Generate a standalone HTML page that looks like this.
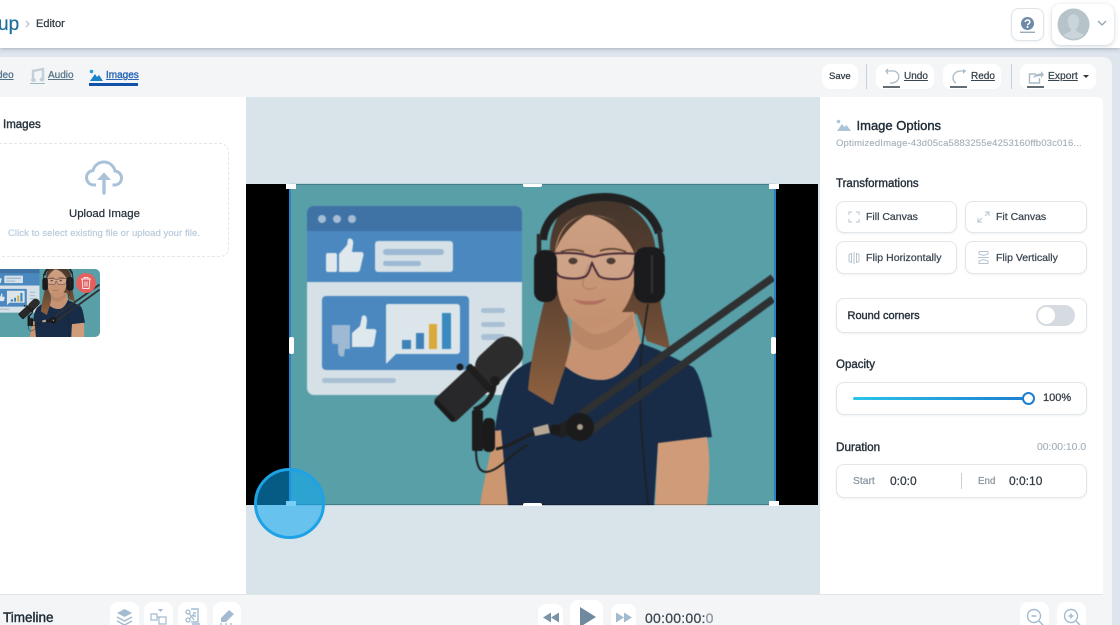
<!DOCTYPE html>
<html lang="en"><head><meta charset="utf-8"><title>Editor</title>
<style>
*{box-sizing:border-box}
html,body{margin:0;padding:0;width:1120px;height:625px;overflow:hidden;background:#dfe5ec;font-family:"Liberation Sans",sans-serif;color:#1f2a37}
#w{position:relative;width:1120px;height:625px;overflow:hidden;background:#dfe5ec}
#f{position:absolute;left:0;top:0;width:1120px;height:625px;filter:blur(.3px)}
.a{position:absolute}
.t{position:absolute;white-space:nowrap;line-height:1;-webkit-text-stroke:.25px currentColor}
.h{-webkit-text-stroke:.4px currentColor}
.b{position:absolute;background:#fff;border-radius:8px}
.o{position:absolute;background:#fff;border:1px solid #e1e6ea;border-radius:8px;box-shadow:0 1px 2px rgba(60,80,100,.08)}
svg{position:absolute;overflow:visible}
</style></head><body>

<svg width="0" height="0" style="position:absolute">
<defs>
<linearGradient id="hg" x1="0" y1="0" x2="0" y2="1"><stop offset="0" stop-color="#43352c"/><stop offset=".45" stop-color="#5d4231"/><stop offset="1" stop-color="#8f6240"/></linearGradient>
<linearGradient id="sk" x1="0" y1="0" x2="0" y2="1"><stop offset="0" stop-color="#cda083"/><stop offset="1" stop-color="#c4906f"/></linearGradient>
<symbol id="photo" viewBox="290 184 485 321" preserveAspectRatio="none">
<rect x="290" y="184" width="485" height="321" fill="#589fa8"/>
<rect x="307" y="206" width="215" height="189" rx="7" fill="#d5e1e6"/>
<path d="M307 282V213a7 7 0 0 1 7-7h201a7 7 0 0 1 7 7v69z" fill="#4a88bf"/>
<path d="M307 231V213a7 7 0 0 1 7-7h201a7 7 0 0 1 7 7v18z" fill="#3f72a5"/>
<circle cx="322" cy="219" r="4" fill="#a5bcd4"/><circle cx="337" cy="219" r="4" fill="#a5bcd4"/><circle cx="352" cy="219" r="4" fill="#a5bcd4"/>
<rect x="326" y="253" width="11" height="19" rx="2" fill="#dfe8ec"/>
<path d="M339 272V254l8-9 1-6c4-2 6 2 5 6l-1 7h9c3 0 3 3 2 5l-3 13c-1 2-2 2-4 2z" fill="#dfe8ec"/>
<rect x="375" y="241" width="78" height="31" rx="3" fill="#d5e1e6"/>
<rect x="383" y="249" width="61" height="6" rx="3" fill="#9db9d3"/><rect x="383" y="261" width="38" height="5" rx="2.5" fill="#9db9d3"/>
<rect x="322" y="296" width="147" height="74" rx="4" fill="#4a88bf"/>
<path d="M332 325h18v24h-5l-1 7c-4 2-6-1-6-6v-6h-4c-2 0-2-2-2-4z" fill="#9db9d3"/>
<path d="M352 333l8-7 2-10c4-2 5 1 5 5l-1 8h8c2 0 3 2 2 4l-2 12c-1 2-2 2-4 2h-18z" fill="#dfe8ec"/>
<path d="M388 304h69a3 3 0 0 1 3 3v44a3 3 0 0 1-3 3h-61l-10 10V306a2 2 0 0 1 2-2z" fill="#dce6ea"/>
<rect x="402" y="340" width="9" height="9" fill="#3f82b8"/><rect x="416" y="333" width="8" height="16" fill="#3f82b8"/><rect x="429" y="324" width="8" height="25" fill="#d9a93a"/><rect x="442" y="313" width="9" height="36" fill="#3a8abf"/>
<rect x="481" y="308" width="24" height="5" rx="2.5" fill="#a9c0d4"/><rect x="481" y="322" width="24" height="5" rx="2.5" fill="#a9c0d4"/><rect x="481" y="334" width="24" height="6" rx="3" fill="#a9c0d4"/>
<rect x="322" y="378" width="74" height="5" rx="2.5" fill="#a9c0d4"/>
<!-- shirt -->
<path d="M495 430c3-24 8-46 18-57 8-8 18-12 30-16l22 9c10 9 22 14 36 14 18 0 30-16 39-37l16 6 37 18c8 8 14 36 19 70l-54 7-4 61H507l-6-72z" fill="#182b47"/>
<path d="M495 431l6-1 7 75h-28c4-26 10-50 15-74z" fill="#cb9670"/>
<path d="M658 443l49-6c4 22 2 46 0 68h-52z" fill="#cf9b78"/>
<!-- hair -->
<path d="M596 196c-28 0-44 20-46 50-1 22-1 40-7 60-6 26-13 56-15 84l25 15c4-14 9-28 13-40l5-26-4-25h70l10 27 23 8c-3-18-7-30-9-44l-6-60c-3-26-30-49-59-49z" fill="url(#hg)"/>
<!-- neck -->
<path d="M572 312h62l7 32-1 0c-9 21-21 36-39 36-14 0-27-6-36-14l6-22z" fill="#c69272"/>
<path d="M572 316c6 10 16 18 24 18 10 0 24-8 36-20l2 12c-8 12-24 24-38 24-10 0-18-6-24-14z" fill="#a9775a" opacity=".45"/>
<!-- face -->
<path d="M555 256c0-24 14-41 35-41 27 0 47 18 47 44 0 24-6 42-16 54-8 9-18 15-28 15-11 0-22-6-29-17-7-12-9-33-9-55z" fill="url(#sk)"/>
<path d="M556 250c3-18 12-32 30-35-10 6-24 18-30 35z" fill="#4f392c"/>
<path d="M590 215c20 4 38 20 46 42 2-24-16-40-46-42z" fill="#4f392c"/>
<path d="M588 265c-2 8-6 16-5 21 2 4 10 4 13 1" fill="none" stroke="#a9745a" stroke-width="1.200" opacity=".7"/>
<path d="M573 299c10 3 24 3 34-1-6 8-26 10-34 1z" fill="#b0705f"/>
<path d="M561 252c6-3 16-3 23 0M600 251c8-3 18-3 26 1" stroke="#57402f" stroke-width="1.600" fill="none"/>
<ellipse cx="573" cy="261" rx="4.500" ry="3.200" fill="#3a281d"/><ellipse cx="611" cy="261" rx="4.500" ry="3.200" fill="#3a281d"/>
<path d="M551 254c12-2 30-1 39 2 3 1 5 1 7 0 10-3 28-3 40-2-1 7-4 20-9 23-8 3-24 3-29-1-3-4-5-9-7-13-2 4-2 9-6 13-6 4-21 3-27 0-4-4-7-15-8-22z" fill="rgba(255,255,255,.1)" stroke="#4a2e3a" stroke-width="2"/>
<!-- headphones -->
<path d="M543 240c2-26 28-43 62-43 26 0 47 14 54 36" fill="none" stroke="#212122" stroke-width="8"/>
<path d="M539 234v20M659 230l3 22" stroke="#2a2a2b" stroke-width="4.500"/>
<rect x="534" y="250" width="23" height="52" rx="10" fill="#1b1b1d"/>
<rect x="634" y="247" width="31" height="56" rx="12" fill="#1b1b1d"/>
<path d="M652 255v38" stroke="#333335" stroke-width="2"/>
<path d="M648 304c-4 24-7 46-8 70-1 40 4 90 8 131" fill="none" stroke="#1e2022" stroke-width="1.600"/>
<!-- boom -->
<path d="M581 414L773 277.500" stroke="#2f3031" stroke-width="7.500"/>
<path d="M591 431L773 299" stroke="#2f3031" stroke-width="7.500"/>
<path d="M552 428l28-15 8 17-28 8z" fill="#1f2021"/>
<circle cx="580" cy="427" r="14" fill="#1b1b1c"/><circle cx="580" cy="427" r="3" fill="#a79a88"/>
<circle cx="555" cy="430" r="5.500" fill="#1b1b1c"/>
<path d="M533 428l15-4 2 9-15 3z" fill="#b5a794"/>
<path d="M496 449c14-2 26-12 38-16" stroke="#1f2021" stroke-width="3" fill="none"/>
<path d="M476 450c0 14 3 22 10 22 14-1 26-20 42-27" stroke="#1f2021" stroke-width="2" fill="none"/>
<!-- mic -->
<rect x="472" y="410" width="11" height="41" rx="2" fill="#1c1c1d"/>
<rect x="483" y="418" width="12" height="34" rx="5" fill="#1a1a1b"/>
<path d="M494 381c1 12-6 24-20 29" stroke="#1d1d1e" stroke-width="5" fill="none"/>
<g transform="rotate(-43 480.500 377.500)">
<rect x="429" y="362" width="55" height="31" rx="5" fill="#28282a"/>
<rect x="480" y="361" width="52" height="33" rx="15" fill="#2c2c2d"/>
<rect x="476" y="360" width="7" height="35" rx="2" fill="#1e1e1f"/>
<rect x="429" y="364" width="5" height="27" rx="2" fill="#1a1a1b"/>
</g>
<circle cx="495" cy="381" r="5" fill="#1d1d1e"/>
<circle cx="460" cy="367" r="3.500" fill="#1d1d1e"/>
</symbol>
</defs>
</svg>

<div id="w"><div id="f">
<!-- header -->
<div class="a" style="left:0;top:0;width:1120px;height:48px;background:#fff;box-shadow:0 1px 4px rgba(90,110,130,.45)"></div>
<div class="t" style="left:-2px;top:15px;font-size:19px;color:#1f6e9c">up</div>
<svg style="left:25px;top:20px" width="6" height="8" viewBox="0 0 6 8"><path d="M1 1l3 3-3 3" stroke="#a9b0b6" fill="none"/></svg>
<div class="t" style="left:36px;top:19px;font-size:11px;color:#333c44">Editor</div>

<div class="o" style="left:1011px;top:8px;width:33px;height:33px;border-color:#dfe4e8"></div>
<svg style="left:1019px;top:16px" width="17" height="17" viewBox="0 0 17 17"><circle cx="8.500" cy="7.500" r="6.500" fill="#6d8aa6"/><path d="M6.200 6c.2-2.600 4.800-2.600 4.700 0 0 1.700-2.300 1.600-2.300 3.200" stroke="#fff" stroke-width="1.500" fill="none"/><circle cx="8.500" cy="11" r="1" fill="#fff"/><path d="M1 16.200h15" stroke="#6d8aa6" stroke-width="1"/></svg>
<div class="b" style="left:1052px;top:4px;width:62px;height:41px;border-radius:9px;box-shadow:0 1px 4px rgba(80,100,120,.3)"></div>
<svg style="left:1057px;top:8px" width="33" height="33" viewBox="0 0 33 33"><circle cx="16.500" cy="16.500" r="16" fill="#b6c4ca"/><path d="M11 13c0-9 11-9 11 0 0 4-1.500 7-3 8v2l8 4a16 16 0 0 1-21 0l8-4v-2c-1.500-1-3-4-3-8z" fill="#c9d5da"/></svg>
<svg style="left:1097px;top:20px" width="10" height="7" viewBox="0 0 10 7"><path d="M1 1l4 4 4-4" stroke="#8ea3b3" stroke-width="1.300" fill="none"/></svg>

<!-- toolbar panel -->
<div class="a" style="left:0;top:57px;width:1112px;height:568px;background:#f3f5f7;border-radius:0 9px 0 0"></div>

<div class="t" style="left:-3px;top:71px;font-size:10px;color:#50708a;text-decoration:underline">deo</div>
<svg style="left:30px;top:67px" width="16" height="17" viewBox="0 0 16 17"><path d="M3 12V4l10-2v10" stroke="#c3d0d9" stroke-width="2.400" fill="none"/><ellipse cx="3.500" cy="13" rx="2.500" ry="2" fill="#c3d0d9"/><ellipse cx="12" cy="12.500" rx="2.500" ry="2" fill="#c3d0d9"/><path d="M0 16.500h15" stroke="#9fb8c6"/></svg>
<div class="t" style="left:48px;top:71px;font-size:10px;color:#5a7488;text-decoration:underline">Audio</div>
<svg style="left:89px;top:69px" width="15" height="13" viewBox="0 0 15 13"><circle cx="2.500" cy="2.500" r="1.800" fill="#2a9ad6"/><path d="M1 12l5-7 2 3 2-2 4 6z" fill="#1b82c9"/></svg>
<div class="t h" style="left:106px;top:71px;font-size:10px;color:#2b68b8;text-decoration:underline">Images</div>
<div class="a" style="left:89px;top:83px;width:49px;height:3px;background:#0f52a8"></div>

<div class="b" style="left:822px;top:64px;width:36px;height:25px"></div>
<div class="t" style="left:829px;top:72px;font-size:9.500px;color:#333c44">Save</div>
<div class="a" style="left:865.500px;top:64px;width:1px;height:25px;background:#c6d1d9"></div>
<div class="b" style="left:876px;top:64px;width:58px;height:25px"></div>
<svg style="left:883px;top:69px" width="18" height="19" viewBox="0 0 18 19"><path d="M3 2h6a5.500 5.500 0 0 1 2 11.500 6 6 0 0 1-4 .5M5 0l-2 2 2 3" stroke="#a9bbc8" stroke-width="1.300" fill="none"/><path d="M0 18h17" stroke="#303c46" stroke-width="1.500"/></svg>
<div class="t" style="left:904px;top:72px;font-size:10px;color:#38444e;text-decoration:underline">Undo</div>
<div class="b" style="left:943px;top:64px;width:58px;height:25px"></div>
<svg style="left:950px;top:69px" width="18" height="19" viewBox="0 0 18 19"><path d="M16 2h-5C6 2 3 5 3 9c0 2 1 4 3 5" stroke="#a9bbc8" stroke-width="1.300" fill="none"/><path d="M13 0l3 2-3 3z" fill="#a9bbc8"/><path d="M0 18h17" stroke="#303c46" stroke-width="1.500"/></svg>
<div class="t" style="left:971px;top:72px;font-size:10px;color:#38444e;text-decoration:underline">Redo</div>
<div class="a" style="left:1011px;top:64px;width:1px;height:25px;background:#c6d1d9"></div>
<div class="b" style="left:1020px;top:64px;width:76px;height:25px"></div>
<svg style="left:1027px;top:69px" width="18" height="19" viewBox="0 0 18 19"><path d="M9 5H2.500v9h10V9" stroke="#a9bbc8" stroke-width="1.400" fill="none"/><path d="M6 9c1-3 4-4.500 8-4.500V2l3 3.500-3 3.500V7c-3 0-5 .5-8 2z" fill="#a9bbc8"/><path d="M0 18h17" stroke="#303c46" stroke-width="1.500"/></svg>
<div class="t" style="left:1048px;top:72px;font-size:10.300px;color:#38444e;text-decoration:underline">Export</div>
<div class="a" style="left:1083px;top:75px;border:3px solid transparent;border-top:3px solid #333;border-bottom:0"></div>

<!-- left panel -->
<div class="a" style="left:0;top:97px;width:246px;height:498px;background:#fff"></div>
<div class="t h" style="left:3px;top:120px;font-size:11.500px;color:#27323c">Images</div>
<div class="a" style="left:-10px;top:143px;width:239px;height:114px;border:1px dashed #e1e6ea;border-radius:9px"></div>
<svg style="left:85px;top:160px" width="38" height="36" viewBox="0 0 38 36"><path d="M11 25H9C4 25 1.500 21 1.500 17.500S4 11 8 10.500C9.500 5 14 2 19 2c5.500 0 10 4 11 9 4 .5 6.500 3.500 6.500 7 0 4-3 7-7 7h-2" fill="none" stroke="#a9c2d8" stroke-width="3"/><path d="M19 33V15" stroke="#a9c2d8" stroke-width="3.400" stroke-linecap="round"/><path d="M12 20l7-7.500L26 20z" fill="#a9c2d8"/></svg>
<div class="t" style="left:69px;top:209px;font-size:11.400px;color:#27323c">Upload Image</div>
<div class="t" style="left:8px;top:228.500px;font-size:9.500px;color:#bccddc;letter-spacing:.06px">Click to select existing file or upload your file.</div>
<div class="a" style="left:0;top:269px;width:100px;height:68px;border-radius:0 5px 5px 0;overflow:hidden"><svg width="116" height="77" style="left:-16px;top:-7px"><use href="#photo" width="116" height="77"/></svg></div>
<div class="a" style="left:76px;top:273px;width:20px;height:20px;border-radius:50%;background:#e4605f"></div>
<svg style="left:80px;top:276px" width="12" height="14" viewBox="0 0 12 14"><path d="M1 3h10M4 3V1.500h4V3M2.200 3l.6 9.500h6.400L9.800 3M5 5.500v5M7 5.500v5" stroke="#fbe6e6" stroke-width="1" fill="none"/></svg>

<!-- canvas -->
<div class="a" style="left:246px;top:97px;width:574px;height:498px;background:#d9e4ea"></div>
<div class="a" style="left:246px;top:184px;width:572px;height:321px;background:#000"></div>
<svg style="left:290px;top:184px;filter:blur(.5px)" width="485" height="321"><use href="#photo" width="485" height="321"/></svg>
<div class="a" style="left:289px;top:184px;width:2px;height:321px;background:#2a82c8"></div>
<div class="a" style="left:774px;top:184px;width:2px;height:321px;background:#2a82c8"></div>
<div class="a" style="left:286px;top:184px;width:10px;height:5px;background:#fff"></div>
<div class="a" style="left:769px;top:184px;width:10px;height:5px;background:#fff"></div>
<div class="a" style="left:286px;top:501px;width:10px;height:5px;background:#fff"></div>
<div class="a" style="left:769px;top:501px;width:10px;height:5px;background:#fff"></div>
<div class="a" style="left:523px;top:184px;width:19px;height:3px;background:#fff;border-radius:0 0 2px 2px"></div>
<div class="a" style="left:523px;top:503px;width:19px;height:3px;background:#fff;border-radius:2px 2px 0 0"></div>
<div class="a" style="left:288.500px;top:337px;width:5px;height:17px;background:#fff;border-radius:2px"></div>
<div class="a" style="left:771px;top:337px;width:5px;height:17px;background:#fff;border-radius:2px"></div>
<div class="a" style="left:254px;top:468px;width:71px;height:71px;border-radius:50%;border:3px solid #1ea2e5;background:rgba(10,165,240,.55)"></div>

<!-- right panel -->
<div class="a" style="left:820px;top:97px;width:283px;height:498px;background:#fff;border-radius:0 5px 0 0"></div>
<svg style="left:836px;top:119px" width="16" height="13" viewBox="0 0 16 13"><circle cx="2.500" cy="2.500" r="1.800" fill="#aec5d8"/><path d="M1 12l5-7 2.500 3 2-2 4.500 6z" fill="#aec5d8"/></svg>
<div class="t h" style="left:856.500px;top:119px;font-size:13px;color:#1f2b36">Image Options</div>
<div class="t" style="left:836px;top:139px;font-size:9.500px;color:#a3adb6;letter-spacing:.17px;-webkit-text-stroke:.1px">OptimizedImage-43d05ca5883255e4253160ffb03c016...</div>

<div class="t h" style="left:836px;top:179px;font-size:11.500px;color:#27323c">Transformations</div>
<div class="o" style="left:836px;top:201px;width:121px;height:32px"></div>
<div class="o" style="left:965px;top:201px;width:122px;height:32px"></div>
<div class="o" style="left:836px;top:241px;width:121px;height:33px"></div>
<div class="o" style="left:965px;top:241px;width:122px;height:33px"></div>
<svg style="left:848px;top:211px" width="12" height="12" viewBox="0 0 12 12"><path d="M1 4V1h3M8 1h3v3M11 8v3H8M4 11H1V8" stroke="#b5c6d2" stroke-width="1" fill="none"/></svg>
<div class="t" style="left:866px;top:211.500px;font-size:10.500px;color:#3b4650">Fill Canvas</div>
<svg style="left:977px;top:211px" width="13" height="12" viewBox="0 0 13 12"><path d="M8 1h4v4M12 1L8 5M1 7v4h4M1 11l4-4" stroke="#b5c6d2" stroke-width="1" fill="none"/></svg>
<div class="t" style="left:996px;top:211.500px;font-size:10.500px;color:#3b4650">Fit Canvas</div>
<svg style="left:848px;top:252px" width="12" height="12" viewBox="0 0 12 12"><path d="M3.500 1.500l-2.500 1v7l2.500 1zM8.500 1.500l2.500 1v7l-2.500 1zM6 0v12" stroke="#b5c6d2" stroke-width="1" fill="none"/></svg>
<div class="t" style="left:866px;top:252.500px;font-size:10.500px;color:#3b4650;letter-spacing:.05px">Flip Horizontally</div>
<svg style="left:978px;top:251px" width="11" height="13" viewBox="0 0 11 13"><path d="M1 .5h9v2.500L5.500 4.500 1 3zM1 12.500h9V10L5.500 8.500 1 10zM0 6.500h11" stroke="#b5c6d2" stroke-width="1" fill="none"/></svg>
<div class="t" style="left:996px;top:252.500px;font-size:10.500px;color:#3b4650">Flip Vertically</div>

<div class="o" style="left:836px;top:298px;width:251px;height:35px"></div>
<div class="t h" style="left:847.500px;top:310.500px;font-size:11px;color:#27323c">Round corners</div>
<div class="a" style="left:1036px;top:305px;width:39px;height:21px;border-radius:11px;background:#d5dbe1"></div>
<div class="a" style="left:1038px;top:307px;width:17px;height:17px;border-radius:50%;background:#fff"></div>

<div class="t h" style="left:836px;top:360px;font-size:11.500px;color:#27323c">Opacity</div>
<div class="o" style="left:836px;top:382px;width:251px;height:33px"></div>
<div class="a" style="left:853px;top:396.500px;width:175px;height:3px;border-radius:2px;background:linear-gradient(90deg,#2bc4ea,#1d7fd0)"></div>
<div class="a" style="left:1021.500px;top:391.500px;width:13px;height:13px;border-radius:50%;background:#fff;border:2.500px solid #1d7fd0"></div>
<div class="t" style="left:1043px;top:393px;font-size:11px;color:#333c44">100%</div>

<div class="t h" style="left:836px;top:441.500px;font-size:11.700px;color:#27323c">Duration</div>
<div class="t" style="left:1037px;top:443px;font-size:10.400px;color:#a3adb6;-webkit-text-stroke:.1px">00:00:10.0</div>
<div class="o" style="left:836px;top:464px;width:251px;height:34px"></div>
<div class="t" style="left:853px;top:477px;font-size:10.300px;color:#8b96a0">Start</div>
<div class="t" style="left:890px;top:475px;font-size:12px;color:#333c44">0:0:0</div>
<div class="a" style="left:961px;top:473px;width:1px;height:16px;background:#c5cfd6"></div>
<div class="t" style="left:978px;top:477px;font-size:9.800px;color:#8b96a0">End</div>
<div class="t" style="left:1009px;top:475px;font-size:12px;color:#333c44">0:0:10</div>

<!-- timeline -->
<div class="a" style="left:0;top:594px;width:1103px;height:1px;background:#e1e5e8"></div>
<div class="t h" style="left:3px;top:611px;font-size:13.500px;color:#1f2b36">Timeline</div>
<div class="b" style="left:110px;top:602px;width:29px;height:30px"></div>
<div class="b" style="left:144px;top:602px;width:29px;height:30px"></div>
<div class="b" style="left:178px;top:602px;width:29px;height:30px"></div>
<div class="b" style="left:213px;top:602px;width:28px;height:30px"></div>
<svg style="left:116px;top:608px" width="17" height="17" viewBox="0 0 17 17"><path d="M8.500 1L16 5l-7.500 4L1 5z" fill="#a3bbd0"/><path d="M1 9l7.500 4L16 9M1 13l7.500 4L16 13" stroke="#a3bbd0" stroke-width="1.500" fill="none"/></svg>
<svg style="left:150px;top:608px" width="17" height="17" viewBox="0 0 17 17"><path d="M8 1h5l-2.500 3z" fill="#a3bbd0"/><path d="M1 6h6v6H1zM9 9h7v7H9zM7 9h2" stroke="#a3bbd0" stroke-width="1.200" fill="none"/></svg>
<svg style="left:184px;top:608px" width="17" height="17" viewBox="0 0 17 17"><path d="M7 1h7v13H7M16 16H8M9 5h3M9 8h3" stroke="#a3bbd0" stroke-width="1.400" fill="none"/><circle cx="4" cy="4" r="2" fill="none" stroke="#a3bbd0" stroke-width="1.300"/><circle cx="4" cy="12" r="2" fill="none" stroke="#a3bbd0" stroke-width="1.300"/><path d="M5 5l5 7M5 11l5-5" stroke="#a3bbd0" stroke-width="1.200"/></svg>
<svg style="left:219px;top:608px" width="17" height="17" viewBox="0 0 17 17"><path d="M2 10l8-8 5 4-8 8H2z" fill="#a3bbd0"/><path d="M1 16h2M6 16h2M11 16h2" stroke="#a3bbd0" stroke-width="1.200"/></svg>

<div class="b" style="left:538px;top:604px;width:25px;height:28px"></div>
<div class="b" style="left:570px;top:600px;width:33px;height:32px"></div>
<div class="b" style="left:611px;top:604px;width:25px;height:28px"></div>
<svg style="left:543px;top:612px" width="16" height="11" viewBox="0 0 16 11"><path d="M8 .5v10L0 5.500zM16 .5v10L8 5.500z" fill="#7b93a8"/></svg>
<svg style="left:579px;top:606px" width="17" height="22" viewBox="0 0 17 22"><path d="M1 1l16 10L1 21z" fill="#6f8a9f"/></svg>
<svg style="left:616px;top:612px" width="16" height="11" viewBox="0 0 16 11"><path d="M0 .5v10l8-5zM8 .5v10l8-5z" fill="#a3bbd0"/></svg>
<div class="t" style="left:645px;top:611px;font-size:14px;color:#3a444d;letter-spacing:.25px">00:00:00:<span style="color:#8a949c">0</span></div>

<div class="b" style="left:1020px;top:602px;width:29px;height:30px"></div>
<div class="b" style="left:1057px;top:602px;width:29px;height:30px"></div>
<svg style="left:1026px;top:608px" width="18" height="18" viewBox="0 0 18 18"><circle cx="8" cy="8" r="6.500" fill="none" stroke="#a3bbd0" stroke-width="1.400"/><path d="M5.500 8h5M13 13l4 4" stroke="#a3bbd0" stroke-width="1.500"/></svg>
<svg style="left:1063px;top:608px" width="18" height="18" viewBox="0 0 18 18"><circle cx="8" cy="8" r="6.500" fill="none" stroke="#a3bbd0" stroke-width="1.400"/><path d="M5.500 8h5M8 5.500v5M13 13l4 4" stroke="#a3bbd0" stroke-width="1.500"/></svg>
</div></div>
</body></html>
